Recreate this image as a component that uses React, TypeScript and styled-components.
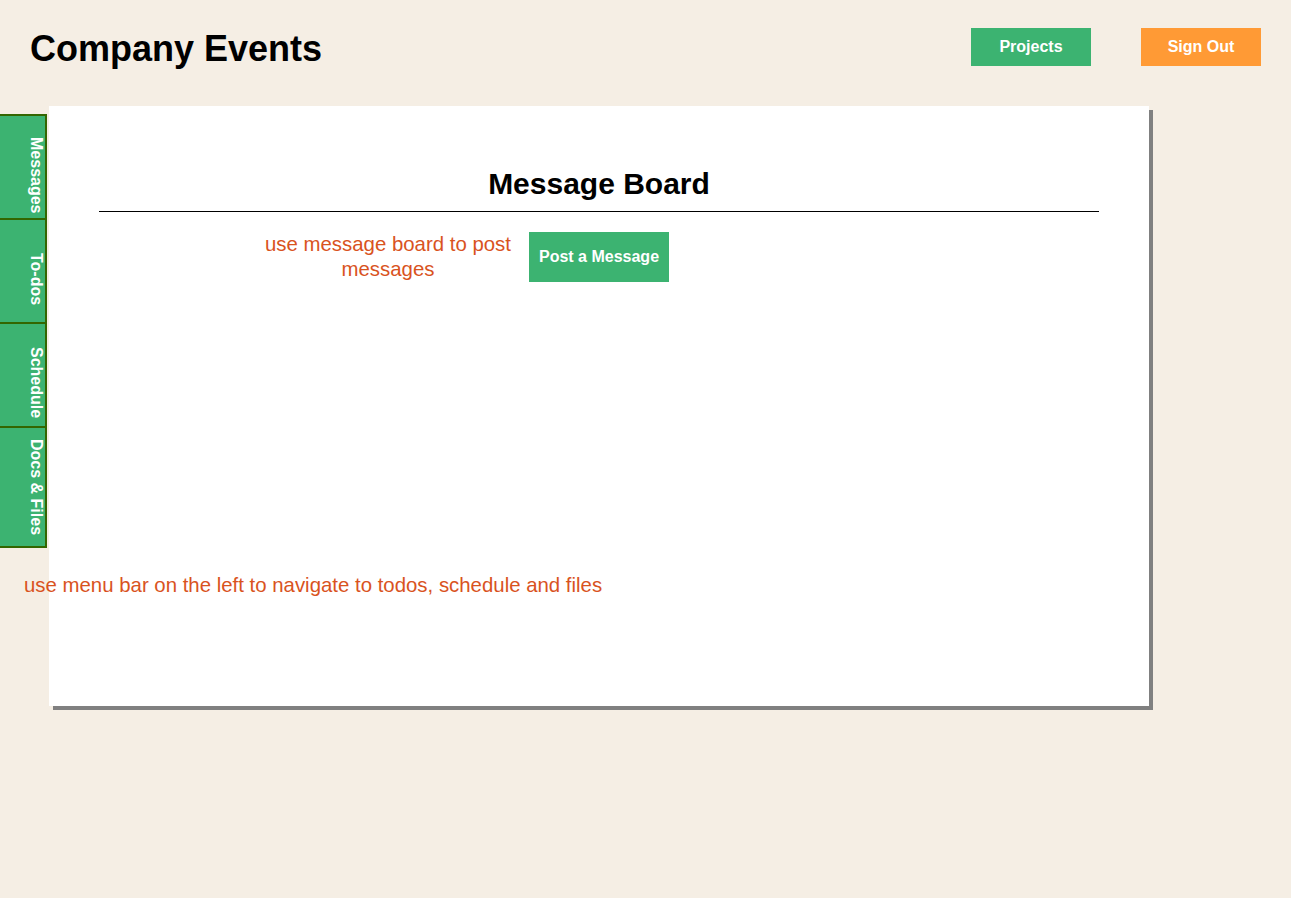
import React from 'react';
import styled, { createGlobalStyle } from 'styled-components';

const GlobalStyle = createGlobalStyle`
  body {
    margin: 0;
    background-color: #f5eee4;
    font-family: "Liberation Sans", Arial, Helvetica, sans-serif;
  }
`;

const Page = styled.div`
  min-height: 898px;
`;

const Header = styled.header`
  display: flex;
  align-items: flex-start;
  justify-content: space-between;
  padding: 28px 30px 0 30px;
  height: 78px;
`;

const Title = styled.h1`
  margin: 2px 0 0 0;
  font-size: 36px;
  line-height: 38px;
  font-weight: bold;
  color: #000000;
`;

const HeaderButtons = styled.div`
  display: flex;
  gap: 50px;
`;

const HeaderButton = styled.button<{ $color: string }>`
  width: 120px;
  height: 38px;
  border: none;
  background-color: ${({ $color }) => $color};
  color: white;
  font-family: inherit;
  font-size: 16px;
  font-weight: bold;
  cursor: pointer;
`;

const Main = styled.div`
  display: flex;
  align-items: flex-start;
  gap: 2px;
`;

const LeftColumn = styled.div`
  width: 47px;
  margin-top: 8px;
  position: relative;
  z-index: 1;
`;

const SideNav = styled.nav`
  display: flex;
  flex-direction: column;
  border-right: 2px solid #336600;
  border-bottom: 2px solid #336600;
  background-color: #3cb371;
`;

const Tab = styled.a<{ $tall?: boolean }>`
  box-sizing: border-box;
  display: flex;
  flex-direction: column;
  align-items: flex-end;
  justify-content: center;
  height: ${({ $tall }) => ($tall ? '120px' : '104px')};
  padding: ${({ $tall }) => ($tall ? '11px 0 11px 0' : '16px 0 0 0')};
  border-top: 2px solid #336600;
  color: white;
  text-decoration: none;
  cursor: pointer;

  span {
    writing-mode: vertical-rl;
    font-size: 16px;
    line-height: 17px;
    font-weight: bold;
    white-space: nowrap;
  }
`;

const Hint = styled.p`
  margin: 25px 0 0 24px;
  font-size: 20.4px;
  line-height: 25px;
  color: #d9531e;
  white-space: nowrap;
`;

const Card = styled.section`
  box-sizing: border-box;
  width: 1100px;
  height: 600px;
  background-color: white;
  box-shadow: 4px 4px 0 #808080;
  padding-top: 61px;
`;

const BoardHeading = styled.h2`
  margin: 0 50px;
  padding-bottom: 10px;
  border-bottom: 1px solid #000000;
  text-align: center;
  font-size: 30px;
  line-height: 34px;
  font-weight: bold;
  color: #000000;
`;

const BoardRow = styled.div`
  display: flex;
  align-items: flex-start;
  gap: 16px;
  margin-top: 20px;
  padding-left: 214px;
`;

const BoardNote = styled.p`
  margin: 0;
  width: 250px;
  text-align: center;
  font-size: 20.4px;
  line-height: 25px;
  color: #d9531e;
`;

const PostButton = styled.button`
  width: 140px;
  height: 50px;
  border: none;
  background-color: #3cb371;
  color: white;
  font-family: inherit;
  font-size: 16px;
  font-weight: bold;
  cursor: pointer;
`;

const tabs = ['Messages', 'To-dos', 'Schedule', 'Docs & Files'];

const App = () => {
  return (
    <Page>
      <GlobalStyle />
      <Header>
        <Title>Company Events</Title>
        <HeaderButtons>
          <HeaderButton $color="#3cb371">Projects</HeaderButton>
          <HeaderButton $color="#ff9a35">Sign Out</HeaderButton>
        </HeaderButtons>
      </Header>
      <Main>
        <LeftColumn>
          <SideNav>
            {tabs.map((tab, i) => (
              <Tab key={tab} $tall={i === tabs.length - 1}>
                <span>{tab}</span>
              </Tab>
            ))}
          </SideNav>
          <Hint>use menu bar on the left to navigate to todos, schedule and files</Hint>
        </LeftColumn>
        <Card>
          <BoardHeading>Message Board</BoardHeading>
          <BoardRow>
            <BoardNote>use message board to post messages</BoardNote>
            <PostButton>Post a Message</PostButton>
          </BoardRow>
        </Card>
      </Main>
    </Page>
  );
};

export default App;
